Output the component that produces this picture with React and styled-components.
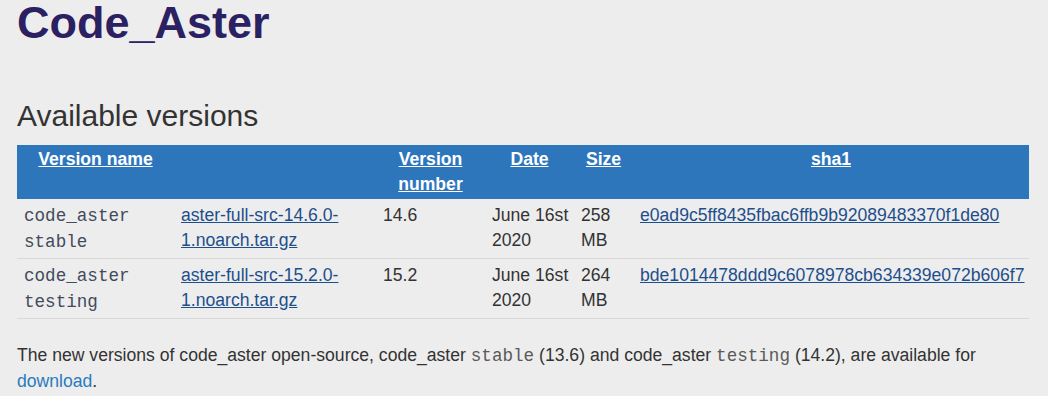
import React from "react";
import styled, { createGlobalStyle } from "styled-components";

const GlobalStyle = createGlobalStyle`
  html, body {
    margin: 0;
    padding: 0;
    background: #ffffff;
  }
`;

const Page = styled.div`
  width: 1048px;
  min-height: 100vh;
  box-sizing: border-box;
  padding: 0 19px 1px 17px;
  background: #ededed;
  font-family: "Liberation Sans", Arial, sans-serif;
  font-size: 17.6px;
  color: #333333;
`;

const Title = styled.h1`
  margin: -2px 0 0;
  font-size: 45px;
  line-height: 1.1;
  font-weight: bold;
  color: #2b2062;
`;

const SubTitle = styled.h2`
  margin: 53px 0 14px;
  font-size: 30px;
  line-height: 1;
  font-weight: normal;
  color: #333333;
`;

const Table = styled.table`
  width: 100%;
  border-collapse: collapse;
  table-layout: fixed;
`;

const HeadRow = styled.tr`
  background: #2e76bc;
`;

const HeadCell = styled.th`
  padding: 2px 4px 2px;
  line-height: 25px;
  text-align: center;
  vertical-align: top;
  font-weight: bold;
`;

const HeadLink = styled.a`
  color: #ffffff;
  text-decoration: underline;
`;

const Row = styled.tr`
  border-bottom: 1px solid #d9d9d9;
`;

const Cell = styled.td`
  padding: 4px 2px 3px 7px;
  line-height: 25px;
  vertical-align: top;
  text-align: left;
`;

const Mono = styled.code`
  font-family: "Liberation Mono", "Courier New", monospace;
  font-size: 17.6px;
  color: ${(props) => (props.dim ? "#5a5a5a" : "#434b5c")};
`;

const FileLink = styled.a`
  color: #1d4f8c;
  text-decoration: underline;
`;

const Note = styled.p`
  margin: 24px 0 0;
  line-height: 25.7px;
`;

const TextLink = styled.a`
  color: #2a7bbd;
  text-decoration: none;
`;

const versions = [
  {
    name: "stable",
    file: ["aster-full-src-14.6.0-", "1.noarch.tar.gz"],
    number: "14.6",
    date: "June 16st 2020",
    size: "258 MB",
    sha: "e0ad9c5ff8435fbac6ffb9b92089483370f1de80",
  },
  {
    name: "testing",
    file: ["aster-full-src-15.2.0-", "1.noarch.tar.gz"],
    number: "15.2",
    date: "June 16st 2020",
    size: "264 MB",
    sha: "bde1014478ddd9c6078978cb634339e072b606f7",
  },
];

const App = () => {
  return (
    <Page>
      <GlobalStyle />
      <Title>Code_Aster</Title>
      <SubTitle>Available versions</SubTitle>
      <Table>
        <colgroup>
          <col style={{ width: 157 }} />
          <col style={{ width: 202 }} />
          <col style={{ width: 109 }} />
          <col style={{ width: 89 }} />
          <col style={{ width: 59 }} />
          <col />
        </colgroup>
        <thead>
          <HeadRow>
            <HeadCell>
              <HeadLink href="#">Version name</HeadLink>
            </HeadCell>
            <HeadCell />
            <HeadCell>
              <HeadLink href="#">Version number</HeadLink>
            </HeadCell>
            <HeadCell>
              <HeadLink href="#">Date</HeadLink>
            </HeadCell>
            <HeadCell>
              <HeadLink href="#">Size</HeadLink>
            </HeadCell>
            <HeadCell>
              <HeadLink href="#">sha1</HeadLink>
            </HeadCell>
          </HeadRow>
        </thead>
        <tbody>
          {versions.map((v) => (
            <Row key={v.name}>
              <Cell>
                <Mono>code_aster {v.name}</Mono>
              </Cell>
              <Cell>
                <FileLink href="#">
                  {v.file[0]}
                  <wbr />
                  {v.file[1]}
                </FileLink>
              </Cell>
              <Cell>{v.number}</Cell>
              <Cell>{v.date}</Cell>
              <Cell>{v.size}</Cell>
              <Cell>
                <FileLink href="#">{v.sha}</FileLink>
              </Cell>
            </Row>
          ))}
        </tbody>
      </Table>
      <Note>
        The new versions of code_aster open-source, code_aster{" "}
        <Mono dim>stable</Mono> (13.6) and code_aster <Mono dim>testing</Mono>{" "}
        (14.2), are available for <TextLink href="#">download</TextLink>.
      </Note>
    </Page>
  );
};

export default App;
